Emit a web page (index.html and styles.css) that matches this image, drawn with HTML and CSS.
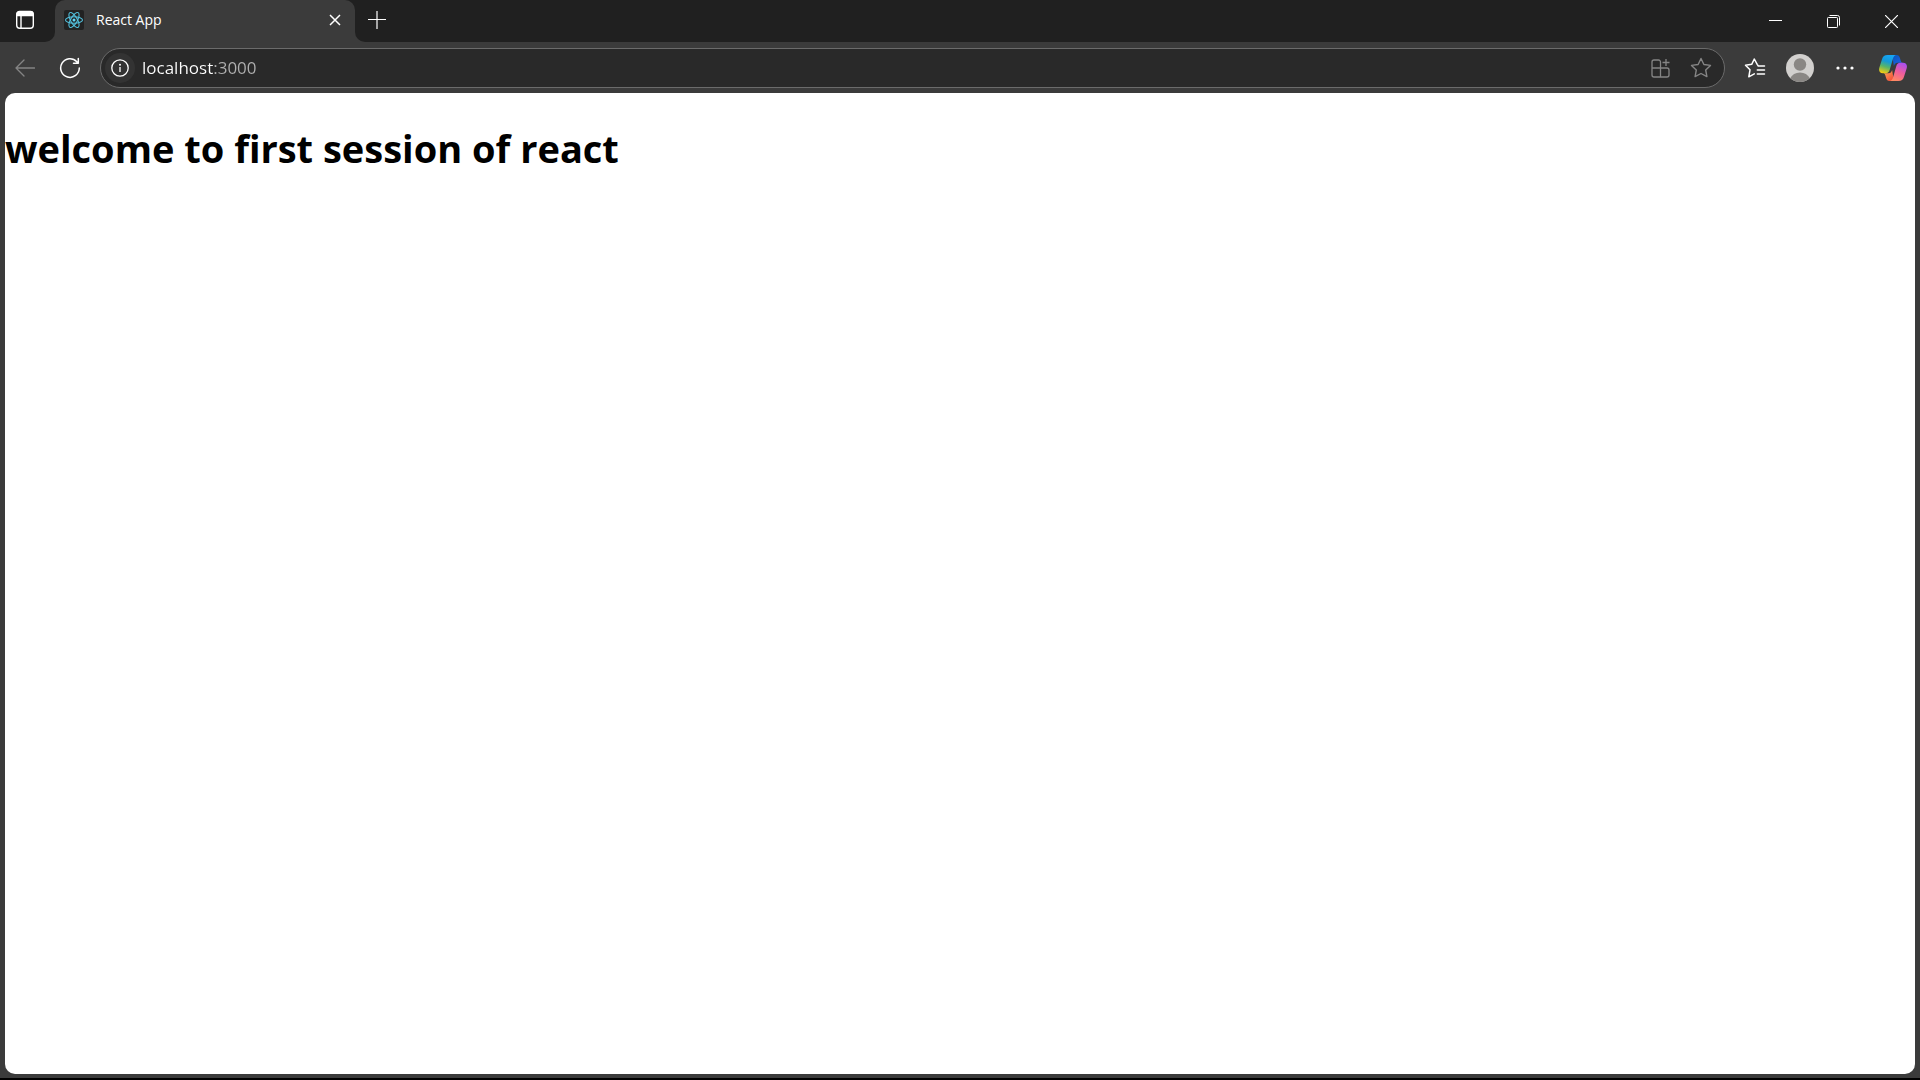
FILE: index.html
```html
<!DOCTYPE html>
<html lang="en">
<head>
<meta charset="utf-8">
<title>React App</title>
<link rel="stylesheet" href="styles.css">
</head>
<body>
<div class="browser">
  <header class="tabstrip">
    <div class="strip-start">
      <button class="icon-button" aria-label="Tab actions menu">
        <svg width="20" height="20" viewBox="0 0 20 20" fill="none" stroke="#fff" stroke-width="1.4"><rect x="1.7" y="1.7" width="16.6" height="16.6" rx="3"/><path d="M2 4a2.5 2.5 0 0 1 2.500-2.500h11A2.500 2.500 0 0 1 18 4v1.500H2z" fill="#fff"/><path d="M6 6v12"/></svg>
      </button>
    </div>
    <div class="tab-slot">
      <div class="tab">
        <svg class="favicon" width="20" height="20" viewBox="0 0 20 20" fill="none" stroke="#53c1de" stroke-width="1.1"><rect width="20" height="20" rx="2" fill="#222" stroke="none"/><ellipse cx="10" cy="10" rx="8.500" ry="3.300"/><ellipse cx="10" cy="10" rx="8.500" ry="3.300" transform="rotate(60 10 10)"/><ellipse cx="10" cy="10" rx="8.500" ry="3.300" transform="rotate(120 10 10)"/><circle cx="10" cy="10" r="1.500" fill="#61dafb" stroke="none"/></svg>
        <span class="tab-title">React App</span>
        <button class="tab-close" aria-label="Close tab">
          <svg width="12" height="12" viewBox="0 0 12 12" stroke="#fff" stroke-width="1.5"><path d="M1 1l10 10M11 1L1 11"/></svg>
        </button>
      </div>
    </div>
    <div class="strip-end">
      <button class="icon-button" aria-label="New tab">
        <svg width="18" height="18" viewBox="0 0 18 18" stroke="#fff" stroke-width="1.2"><path d="M0 8.500h18M9 0v18"/></svg>
      </button>
      <div class="window-controls">
        <button class="window-button" aria-label="Minimize">
          <svg width="13" height="13" viewBox="0 0 13 13"><path d="M0 5h13v1H0z" fill="#fff"/></svg>
        </button>
        <button class="window-button" aria-label="Restore">
          <svg width="13" height="13" viewBox="0 0 13 13" fill="none" stroke="#fff"><rect x=".5" y="2.500" width="10" height="10" rx=".8"/><path d="M2.500.5h8a2 2 0 0 1 2 2v8"/></svg>
        </button>
        <button class="window-button" aria-label="Close">
          <svg width="13" height="13" viewBox="0 0 13 13" stroke="#fff" stroke-width="1.200"><path d="M0 0l13 13M13 0L0 13"/></svg>
        </button>
      </div>
    </div>
  </header>

  <nav class="toolbar" aria-label="Navigation">
    <button class="tool-button" aria-label="Back" disabled>
      <svg width="20" height="18" viewBox="0 0 20 18" fill="none" stroke="#848484" stroke-width="1.300" stroke-linecap="round" stroke-linejoin="round"><path d="M9 1L1 9l8 8M1 9h18.500"/></svg>
    </button>
    <button class="tool-button" aria-label="Refresh">
      <svg width="22" height="22" viewBox="0 0 22 22" fill="none" stroke="#fff" stroke-width="1.500" stroke-linecap="round" stroke-linejoin="round"><path d="M20.300 11A9.300 9.300 0 1 1 17.800 4.700L19.300 6.300M19.300 1.500v4.800h-4.800"/></svg>
    </button>
    <div class="address">
      <button class="site-info" aria-label="View site information">
        <svg width="18" height="18" viewBox="0 0 18 18" fill="none" stroke="#fff" stroke-width="1.300"><circle cx="9" cy="9" r="8.200"/><path d="M9 8v5"/><circle cx="9" cy="5.700" r="1" fill="#fff" stroke="none"/></svg>
      </button>
      <input class="url" type="text" value="localhost:3000" aria-label="Address and search bar" spellcheck="false">
      <button class="address-button" aria-label="Apps">
        <svg width="20" height="20" viewBox="0 0 20 20" fill="none" stroke="#858585" stroke-width="1.300"><path d="M9.500 10V4a2 2 0 0 0-2-2H3a2 2 0 0 0-2 2v13a2 2 0 0 0 2 2h13a2 2 0 0 0 2-2v-5a2 2 0 0 0-2-2zM1 10h8.500M9.500 10v9M15 1v7M11.500 4.500h7"/></svg>
      </button>
      <button class="address-button" aria-label="Add to favorites">
        <svg width="22" height="22" viewBox="0 0 22 22" fill="none" stroke="#858585" stroke-width="1.400" stroke-linejoin="round"><path d="M11 1.500l2.900 6 6.600.9-4.800 4.600 1.200 6.600-5.900-3.100-5.900 3.100L6.300 13 1.500 8.400l6.600-.9z"/></svg>
      </button>
    </div>
    <button class="tool-button" aria-label="Favorites">
      <svg width="22" height="22" viewBox="0 0 22 22" fill="none" stroke="#fff" stroke-width="1.500" stroke-linejoin="round" stroke-linecap="round"><path d="M20.500 9h-6.200L13.200 7.300 10.300 2 7.700 7.300l-6.200.9 4.500 4.600-1.200 7 5.500-3M13.300 13h7.200M13.300 17h7.200"/></svg>
    </button>
    <button class="tool-button" aria-label="Profile">
      <svg width="28" height="28" viewBox="0 0 28 28"><defs><clipPath id="avatar"><circle cx="14" cy="14" r="14"/></clipPath></defs><g clip-path="url(#avatar)"><path d="M0 0h28v28H0z" fill="#d2d0ce"/><circle cx="14" cy="10.500" r="6.200" fill="#8a8784"/><path d="M4 28v-3.500C6 20.500 9.500 18.500 14 18.500s8 2 10 6V28z" fill="#8a8784"/></g></svg>
    </button>
    <button class="tool-button" aria-label="Settings and more">
      <svg width="18" height="4" viewBox="0 0 18 4" fill="#fff"><circle cx="2" cy="2" r="1.600"/><circle cx="9" cy="2" r="1.600"/><circle cx="16" cy="2" r="1.600"/></svg>
    </button>
    <button class="tool-button copilot" aria-label="Copilot">
      <svg width="28" height="26" viewBox="0 0 28 26">
        <defs>
          <linearGradient id="cool" x1=".6" y1="0" x2=".3" y2="1"><stop offset="0" stop-color="#16a5f5"/><stop offset=".35" stop-color="#1499d8"/><stop offset=".65" stop-color="#58b567"/><stop offset="1" stop-color="#f4cb12"/></linearGradient>
          <linearGradient id="warm" x1=".7" y1="0" x2=".3" y2="1"><stop offset="0" stop-color="#a94ff0"/><stop offset=".5" stop-color="#ef5d9b"/><stop offset="1" stop-color="#ff8a62"/></linearGradient>
          <linearGradient id="navy" x1="0" y1="0" x2="1" y2="1"><stop offset="0" stop-color="#0754b5"/><stop offset="1" stop-color="#2466ef"/></linearGradient>
          <linearGradient id="ember" x1="0" y1="0" x2="1" y2="1"><stop offset="0" stop-color="#ffb25b"/><stop offset="1" stop-color="#ef4034"/></linearGradient>
        </defs>
        <path d="M13 0h4.500c2 0 2.800 1.200 3.400 3l.9 3c.4 1.200 1 1.700 2.200 1.700h-5.500c-2 0-3 1.300-3.600 3.300z" fill="url(#navy)"/>
        <path d="M15 26h-4.500c-2 0-2.800-1.200-3.400-3l-.9-3c-.4-1.200-1-1.700-2.200-1.700h5.500c2 0 3-1.300 3.600-3.300z" fill="url(#ember)"/>
        <path d="M8.500 0H17c-1.600.3-2.400 1.600-3 3.500L10.800 14.500c-.8 2.600-1.800 3.800-4 3.800H4C.8 18.300-.5 16 .3 12.800L3 4.200C3.900 1.300 5.500 0 8.500 0z" fill="url(#cool)"/>
        <path d="M19.500 26H11c1.600-.3 2.400-1.600 3-3.500l3.200-11c.8-2.600 1.800-3.800 4-3.800H24c3.200 0 4.500 2.300 3.700 5.500L25 21.800c-.9 2.900-2.500 4.200-5.500 4.200z" fill="url(#warm)"/>
      </svg>
    </button>
  </nav>

  <main class="page">
    <h1 class="headline">welcome to first session of react</h1>
  </main>
</div>
</body>
</html>
```
FILE: styles.css
```css
* {
  box-sizing: border-box;
}

body {
  margin: 0;
  font-family: "Open Sans", "Noto Sans", sans-serif;
}

button {
  display: flex;
  flex: none;
  align-items: center;
  justify-content: center;
  padding: 0;
  border: 0;
  background: none;
}

.browser {
  display: flex;
  flex-direction: column;
  min-height: 100vh;
  padding-bottom: 4px;
  border-bottom: 2px solid #000;
  background: #3b3b3b;
}

.tabstrip {
  display: flex;
  height: 42px;
}

.strip-start {
  display: flex;
  width: 55px;
  padding-left: 5px;
  background: #202020;
  border-bottom-right-radius: 10px;
}

.icon-button {
  width: 40px;
  height: 40px;
}

.tab-slot {
  width: 300px;
  background: linear-gradient(#202020 16px, #3b3b3b 16px);
}

.tab {
  display: flex;
  align-items: center;
  height: 40px;
  padding: 0 10px 0 9px;
  border-radius: 10px 10px 0 0;
  background: #3b3b3b;
}

.tab-title {
  flex: 1;
  margin-left: 12px;
  color: #fff;
  font-size: 14px;
  line-height: 20px;
}

.tab-close {
  width: 20px;
  height: 20px;
}

.strip-end {
  display: flex;
  flex: 1;
  justify-content: space-between;
  padding-left: 2px;
  background: #202020;
  border-bottom-left-radius: 10px;
}

.window-controls {
  display: flex;
}

.window-button {
  width: 58px;
  height: 42px;
}

.toolbar {
  display: flex;
  gap: 1px;
  align-items: center;
  height: 51px;
  padding: 0 2px 0 3px;
}

.tool-button {
  width: 44px;
  height: 40px;
}

.copilot {
  width: 50px;
}

.address {
  display: flex;
  flex: 1;
  align-items: center;
  height: 40px;
  margin: 0 7px;
  padding: 0 3px 0 4px;
  border: 1px solid #6b6b6b;
  border-radius: 20px;
  background: #292929;
}

.site-info {
  width: 30px;
  height: 30px;
  border-radius: 50%;
  background: #333;
}

/* The host is drawn white and the port grey. */
.url {
  flex: 1;
  min-width: 0;
  height: 30px;
  margin-left: 7px;
  padding: 0;
  border: 0;
  outline: 0;
  background: linear-gradient(90deg, #fff 72px, #b0b0b0 72px);
  background-clip: text;
  color: transparent;
  font-family: "Open Sans", "Noto Sans", sans-serif;
  font-size: 17px;
}

.address-button {
  width: 40px;
  height: 36px;
}

.page {
  flex: 1;
  margin: 0 5px;
  padding: 28px 0;
  border-radius: 10px;
  background: #fff;
}

.headline {
  margin: 0;
  color: #000;
  font-size: 38px;
  font-weight: 700;
  line-height: 54px;
}
```
